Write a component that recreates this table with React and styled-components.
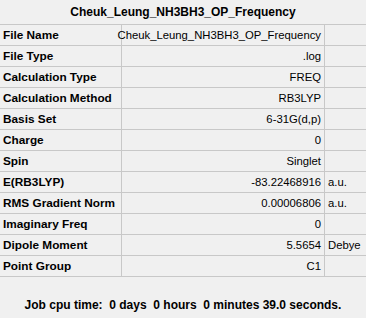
import React from "react";
import styled, { createGlobalStyle } from "styled-components";

const Global = createGlobalStyle`
  html, body { margin: 0; padding: 0; background: #f0f0f0; }
  body { font-family: "Liberation Sans", Arial, sans-serif; }
`;

const Page = styled.div`
  width: 366px;
  height: 318px;
  background: #f0f0f0;
  color: #000;
  display: flex;
  flex-direction: column;
  overflow: hidden;
`;

const Title = styled.div`
  height: 25px;
  box-sizing: border-box;
  display: flex;
  align-items: center;
  justify-content: center;
  font-weight: bold;
  font-size: 12px;
  border-bottom: 1px solid #c8c8c8;
`;

const Table = styled.div`
  display: grid;
  grid-template-columns: 122px 203px 1fr;
`;

const Cell = styled.div`
  height: 21px;
  box-sizing: border-box;
  border-bottom: 1px solid #c8c8c8;
  border-right: ${(p) => (p.$last ? "none" : "1px solid #c8c8c8")};
  display: flex;
  align-items: center;
  justify-content: ${(p) => (p.$align === "right" ? "flex-end" : "flex-start")};
  padding: ${(p) => (p.$align === "right" ? "0 3px 0 0" : "0 0 0 3px")};
  font-size: ${(p) => (p.$bold ? "11.8px" : "11.3px")};
  font-weight: ${(p) => (p.$bold ? "bold" : "normal")};
  white-space: nowrap;
`;

const Footer = styled.div`
  flex: 1;
  display: flex;
  justify-content: center;
  padding-top: 21px;
  font-size: 12px;
  font-weight: bold;
  white-space: pre;
`;

const rows = [
  ["File Name", "Cheuk_Leung_NH3BH3_OP_Frequency", ""],
  ["File Type", ".log", ""],
  ["Calculation Type", "FREQ", ""],
  ["Calculation Method", "RB3LYP", ""],
  ["Basis Set", "6-31G(d,p)", ""],
  ["Charge", "0", ""],
  ["Spin", "Singlet", ""],
  ["E(RB3LYP)", "-83.22468916", "a.u."],
  ["RMS Gradient Norm", "0.00006806", "a.u."],
  ["Imaginary Freq", "0", ""],
  ["Dipole Moment", "5.5654", "Debye"],
  ["Point Group", "C1", ""],
];

export default function App() {
  return (
    <Page>
      <Global />
      <Title>Cheuk_Leung_NH3BH3_OP_Frequency</Title>
      <Table>
        {rows.map(([l, v, u]) => (
          <React.Fragment key={l}>
            <Cell $bold>{l}</Cell>
            <Cell $align="right">{v}</Cell>
            <Cell $last>{u}</Cell>
          </React.Fragment>
        ))}
      </Table>
      <Footer>{"Job cpu time:  0 days  0 hours  0 minutes 39.0 seconds."}</Footer>
    </Page>
  );
}
